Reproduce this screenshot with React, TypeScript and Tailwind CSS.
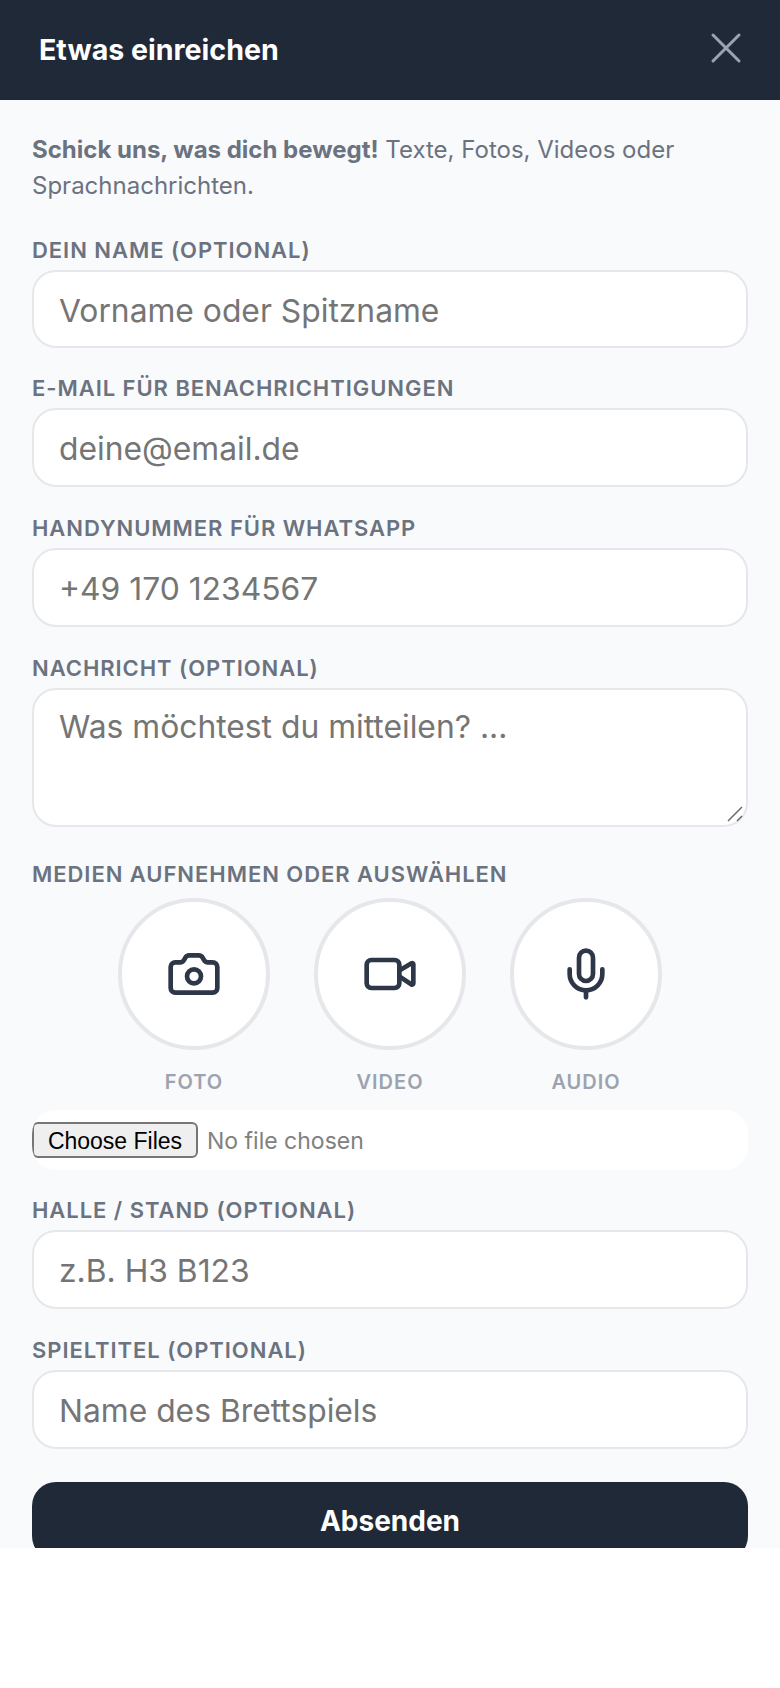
import { Camera, Mic, Video, X } from 'lucide-react';

const inter = 'font-[Inter,sans-serif]';

function FieldLabel({ children }: { children: string }) {
  return (
    <label className="block mb-[6px] text-[22px] leading-[28px] font-semibold uppercase tracking-[0.95px] text-[#6b7280]">
      {children}
    </label>
  );
}

function TextField({ label, placeholder, first }: { label: string; placeholder: string; first?: boolean }) {
  return (
    <div className={first ? 'mb-[26px]' : 'mb-[27px]'}>
      <FieldLabel>{label}</FieldLabel>
      <input
        type="text"
        placeholder={placeholder}
        className={`block w-full ${first ? 'h-[78px]' : 'h-[79px]'} px-[25px] pt-[2px] rounded-[24px] border-2 border-[#e5e7eb] bg-white text-[31.8px] outline-none placeholder:text-[#757575]`}
      />
    </div>
  );
}

const mediaButtons = [
  { label: 'Foto', Icon: Camera },
  { label: 'Video', Icon: Video },
  { label: 'Audio', Icon: Mic },
];

export default function App() {
  return (
    <div className={`${inter} w-[780px] h-[1688px] bg-white`}>
      <div className="h-[1548px] overflow-hidden bg-[#f9fafb]">
        <header className="h-[100px] pl-[39px] pr-[28px] flex items-center justify-between bg-[#1f2937]">
          <h1 className="text-[28.6px] font-bold text-white">Etwas einreichen</h1>
          <button className="text-[#9ca3af] mb-[5px]">
            <X size={52} strokeWidth={1.4} />
          </button>
        </header>

        <form className="px-[32px] pt-[32px]">
          <p className="mb-[32px] text-[24px] leading-[36px] text-[#6b7280]">
            <strong className="font-bold">Schick uns, was dich bewegt!</strong> Texte, Fotos, Videos oder Sprachnachrichten.
          </p>

          <TextField first label="Dein Name (optional)" placeholder="Vorname oder Spitzname" />
          <TextField label="E-Mail für Benachrichtigungen" placeholder="deine@email.de" />
          <TextField label="Handynummer für WhatsApp" placeholder="+49 170 1234567" />

          <div className="mb-[33px]">
            <FieldLabel>Nachricht (optional)</FieldLabel>
            <div className="relative">
              <textarea
                placeholder="Was möchtest du mitteilen? ..."
                className="block w-full h-[139px] px-[25px] py-[18px] resize-none rounded-[24px] border-2 border-[#e5e7eb] bg-white text-[31.8px] leading-[38px] outline-none placeholder:text-[#757575]"
              />
              <svg className="absolute right-[5px] bottom-[5px]" width="16" height="16" viewBox="0 0 16 16" stroke="#666666" strokeWidth="1.5">
                <line x1="1" y1="15" x2="15" y2="1" />
                <line x1="10" y1="15" x2="15" y2="10" />
              </svg>
            </div>
          </div>

          <FieldLabel>Medien aufnehmen oder auswählen</FieldLabel>
          <div className="flex justify-center gap-[44px] mt-[10px] mb-[16px]">
            {mediaButtons.map(({ label, Icon }) => (
              <div key={label} className="flex flex-col items-center">
                <button
                  type="button"
                  className="w-[152px] h-[152px] flex items-center justify-center rounded-full border-4 border-[#e5e7eb] bg-white text-[#2d3748]"
                >
                  <Icon size={56} strokeWidth={2} />
                </button>
                <span className="mt-[20px] text-[20px] leading-[24px] font-semibold uppercase tracking-[1px] text-[#9ca3af]">
                  {label}
                </span>
              </div>
            ))}
          </div>

          <input
            type="file"
            multiple
            className="block w-full h-[60px] py-[12px] mb-[26px] rounded-[24px] bg-white text-[23px] text-[#808080] file:mr-[9px] file:h-[36px] file:w-[166px] file:border-2 file:border-[#767676] file:rounded-[6px] file:bg-[#efefef] file:text-black file:font-[Liberation_Sans,sans-serif]"
          />

          <TextField label="Halle / Stand (optional)" placeholder="z.B. H3 B123" />
          <TextField label="Spieltitel (optional)" placeholder="Name des Brettspiels" />

          <button
            type="button"
            className="block w-full h-[78px] mt-[33px] rounded-[24px] bg-[#1f2937] text-[28px] font-bold text-white"
          >
            Absenden
          </button>
        </form>
      </div>
    </div>
  );
}
